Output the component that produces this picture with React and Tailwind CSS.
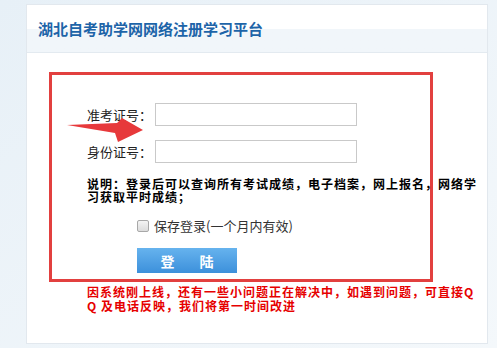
import React from 'react'

const cjk = { fontFamily: '"Noto Sans CJK SC", "Noto Sans", sans-serif' }

function Arrow() {
  return (
    <svg width="80" height="36" viewBox="0 0 80 36" className="absolute left-[66px] top-[110px]">
      <polygon points="1,15 51,13 56,8 77,20 52,32 49,23" fill="#e7393b" />
    </svg>
  )
}

export default function App() {
  return (
    <div className="w-[497px] h-[348px] bg-gradient-to-br from-[#e7f0f7] to-[#f4f8fb] pt-[4px] relative" style={cjk}>
      <div className="ml-[26px] w-[462px] h-[340px] border border-[#e2e8ee] bg-white">
        <div className="h-[48px] border-b border-[#e3eaf0] bg-gradient-to-b from-white from-50% to-[#f1f6fa] to-50% flex items-center pl-[11px]">
          <h1 className="text-[15px] leading-none font-bold text-[#1d64a8]">湖北自考助学网网络注册学习平台</h1>
        </div>

        <div className="ml-[22px] mt-[19px] w-[384px] h-[210px] border-[3px] border-[#e2403f] pt-[28px] pl-[35px]">
          <div className="flex items-center">
            <label className="w-[68px] text-[13px] text-[#222]">准考证号：</label>
            <input className="w-[202px] h-[23px] border border-[#c9c9c9] bg-white outline-none" />
          </div>
          <div className="flex items-center mt-[14px]">
            <label className="w-[68px] text-[13px] text-[#222]">身份证号：</label>
            <input className="w-[202px] h-[23px] border border-[#c9c9c9] bg-white outline-none" />
          </div>
          <p className="mt-[14px] w-[400px] text-[12px] tracking-[1px] leading-[13px] font-bold text-black">
            <span className="block whitespace-nowrap">说明：登录后可以查询所有考试成绩，电子档案，网上报名，网络学</span>
            <span className="block whitespace-nowrap">习获取平时成绩；</span>
          </p>
          <div className="flex items-center ml-[50px] mt-[16px]">
            <span className="w-[12px] h-[12px] border border-[#a8a8a8] rounded-[2px] bg-gradient-to-b from-[#f4f4f4] to-[#dcdcdc]" />
            <span className="ml-[5px] text-[13px] leading-none text-[#333]">保存登录(一个月内有效)</span>
          </div>
          <button className="ml-[50px] mt-[16px] w-[100px] h-[25px] flex items-center justify-center gap-[25px] bg-gradient-to-b from-[#66b3ee] to-[#3c90db] text-white text-[14px] font-bold leading-none">
            <span>登</span>
            <span>陆</span>
          </button>
        </div>

        <p className="ml-[60px] mt-[3px] text-[12px] tracking-[1px] leading-[14px] font-bold text-[#e60000]">
          <span className="block whitespace-nowrap">因系统刚上线，还有一些小问题正在解决中，如遇到问题，可直接Q</span>
          <span className="block whitespace-nowrap">Q 及电话反映，我们将第一时间改进</span>
        </p>
      </div>
      <Arrow />
    </div>
  )
}
